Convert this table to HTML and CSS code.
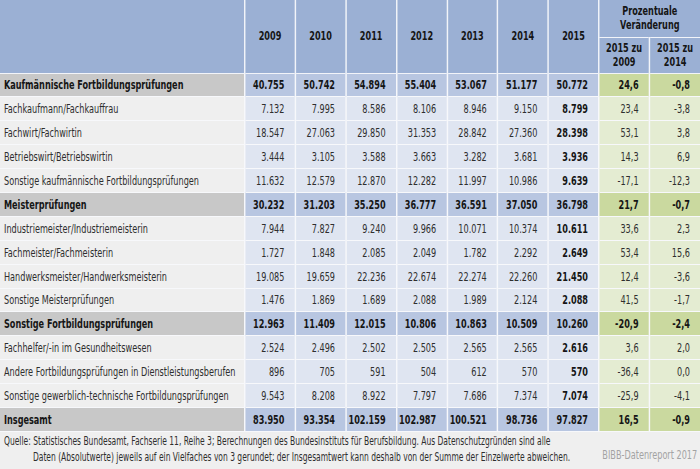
FILE: index.html
```html
<!DOCTYPE html>
<html lang="de">
<head>
<meta charset="utf-8">
<link rel="stylesheet" href="styles.css">
</head>
<body>
<div class="frame">
<div class="page">
<table class="tbl">
  <colgroup>
    <col class="c-label">
    <col class="c-num"><col class="c-num"><col class="c-num"><col class="c-num"><col class="c-num"><col class="c-num"><col class="c-num">
    <col class="c-num"><col class="c-num">
  </colgroup>
  <thead>
    <tr class="h1">
      <th rowspan="2" class="hl"></th>
      <th rowspan="2">2009</th>
      <th rowspan="2">2010</th>
      <th rowspan="2">2011</th>
      <th rowspan="2">2012</th>
      <th rowspan="2">2013</th>
      <th rowspan="2">2014</th>
      <th rowspan="2">2015</th>
      <th colspan="2" class="hp">Prozentuale<br>Veränderung</th>
    </tr>
    <tr class="h2">
      <th>2015 zu<br>2009</th>
      <th>2015 zu<br>2014</th>
    </tr>
  </thead>
  <tbody>
    <tr class="sum"><td class="lbl">Kaufmännische Fortbildungsprüfungen</td><td>40.755</td><td>50.742</td><td>54.894</td><td>55.404</td><td>53.067</td><td>51.177</td><td>50.772</td><td class="p">24,6</td><td class="p">-0,8</td></tr>
    <tr><td class="lbl">Fachkaufmann/Fachkauffrau</td><td>7.132</td><td>7.995</td><td>8.586</td><td>8.106</td><td>8.946</td><td>9.150</td><td class="b">8.799</td><td class="p">23,4</td><td class="p">-3,8</td></tr>
    <tr><td class="lbl">Fachwirt/Fachwirtin</td><td>18.547</td><td>27.063</td><td>29.850</td><td>31.353</td><td>28.842</td><td>27.360</td><td class="b">28.398</td><td class="p">53,1</td><td class="p">3,8</td></tr>
    <tr><td class="lbl">Betriebswirt/Betriebswirtin</td><td>3.444</td><td>3.105</td><td>3.588</td><td>3.663</td><td>3.282</td><td>3.681</td><td class="b">3.936</td><td class="p">14,3</td><td class="p">6,9</td></tr>
    <tr><td class="lbl">Sonstige kaufmännische Fortbildungsprüfungen</td><td>11.632</td><td>12.579</td><td>12.870</td><td>12.282</td><td>11.997</td><td>10.986</td><td class="b">9.639</td><td class="p">-17,1</td><td class="p">-12,3</td></tr>
    <tr class="sum"><td class="lbl">Meisterprüfungen</td><td>30.232</td><td>31.203</td><td>35.250</td><td>36.777</td><td>36.591</td><td>37.050</td><td>36.798</td><td class="p">21,7</td><td class="p">-0,7</td></tr>
    <tr><td class="lbl">Industriemeister/Industriemeisterin</td><td>7.944</td><td>7.827</td><td>9.240</td><td>9.966</td><td>10.071</td><td>10.374</td><td class="b">10.611</td><td class="p">33,6</td><td class="p">2,3</td></tr>
    <tr><td class="lbl">Fachmeister/Fachmeisterin</td><td>1.727</td><td>1.848</td><td>2.085</td><td>2.049</td><td>1.782</td><td>2.292</td><td class="b">2.649</td><td class="p">53,4</td><td class="p">15,6</td></tr>
    <tr><td class="lbl">Handwerksmeister/Handwerksmeisterin</td><td>19.085</td><td>19.659</td><td>22.236</td><td>22.674</td><td>22.274</td><td>22.260</td><td class="b">21.450</td><td class="p">12,4</td><td class="p">-3,6</td></tr>
    <tr><td class="lbl">Sonstige Meisterprüfungen</td><td>1.476</td><td>1.869</td><td>1.689</td><td>2.088</td><td>1.989</td><td>2.124</td><td class="b">2.088</td><td class="p">41,5</td><td class="p">-1,7</td></tr>
    <tr class="sum"><td class="lbl">Sonstige Fortbildungsprüfungen</td><td>12.963</td><td>11.409</td><td>12.015</td><td>10.806</td><td>10.863</td><td>10.509</td><td>10.260</td><td class="p">-20,9</td><td class="p">-2,4</td></tr>
    <tr><td class="lbl">Fachhelfer/-in im Gesundheitswesen</td><td>2.524</td><td>2.496</td><td>2.502</td><td>2.505</td><td>2.565</td><td>2.565</td><td class="b">2.616</td><td class="p">3,6</td><td class="p">2,0</td></tr>
    <tr><td class="lbl">Andere Fortbildungsprüfungen in Dienstleistungsberufen</td><td>896</td><td>705</td><td>591</td><td>504</td><td>612</td><td>570</td><td class="b">570</td><td class="p">-36,4</td><td class="p">0,0</td></tr>
    <tr><td class="lbl">Sonstige gewerblich-technische Fortbildungsprüfungen</td><td>9.543</td><td>8.208</td><td>8.922</td><td>7.797</td><td>7.686</td><td>7.374</td><td class="b">7.074</td><td class="p">-25,9</td><td class="p">-4,1</td></tr>
    <tr class="sum"><td class="lbl">Insgesamt</td><td>83.950</td><td>93.354</td><td>102.159</td><td>102.987</td><td>100.521</td><td>98.736</td><td>97.827</td><td class="p">16,5</td><td class="p">-0,9</td></tr>
  </tbody>
</table>
<div class="foot">
  <p class="src">Quelle: Statistisches Bundesamt, Fachserie 11, Reihe 3; Berechnungen des Bundesinstituts für Berufsbildung. Aus Datenschutzgründen sind alle<br>Daten (Absolutwerte) jeweils auf ein Vielfaches von 3 gerundet; der Insgesamtwert kann deshalb von der Summe der Einzelwerte abweichen.</p>
  <p class="brand">BIBB-Datenreport 2017</p>
</div>
</div>
</div>
</body>
</html>
```

FILE: styles.css
```css
html, body {
  margin: 0;
  padding: 0;
  background: #efefef;
  overflow: hidden;
}
.frame {
  width: 700px;
  height: 469px;
  overflow: hidden;
}
/* The reference uses a narrow sans; DejaVu Sans Condensed is compressed horizontally to match */
.page {
  width: 967px;
  height: 469px;
  background: #efefef;
  font-family: "DejaVu Sans Condensed", "DejaVu Sans", sans-serif;
  font-size: 12.5px;
  color: #2e2e2e;
  transform: scaleX(0.724);
  transform-origin: 0 0;
}
.tbl {
  width: 967px;
  border-collapse: collapse;
  table-layout: fixed;
}
.c-label { width: 338px; }
.tbl th {
  background: #9bb0d4;
  color: #151515;
  font-weight: bold;
  font-size: 12.5px;
  line-height: 14px;
  text-align: center;
  border-right: 2.8px solid #f2f4f9;
  border-bottom: 1px solid #f2f4f9;
  padding: 0;
}
.tbl th:last-child { border-right: none; }
.h1 { height: 37px; }
.h2 { height: 36px; }
.tbl td {
  height: 22.9px;
  padding: 0 14px 0 0;
  text-align: right;
  background: #dfe5f1;
  border-right: 2.8px solid #f7f8fb;
  border-bottom: 1px solid #f7f8fb;
  white-space: nowrap;
}
.tbl td:last-child { border-right: none; }
.tbl td.lbl {
  text-align: left;
  padding: 0 0 0 5.5px;
  background: #efefef;
}
.tbl td.p { background: #e4ecd2; }
.tbl td.b { font-weight: bold; color: #151515; }
.tbl tr.sum td {
  background: #b8c6e1;
  font-weight: bold;
  color: #151515;
}
.tbl tr.sum td.lbl { background: #c8c8c8; }
.tbl tr.sum td.p { background: #cad99f; }
.foot {
  position: relative;
  padding: 1px 5.5px 0 5.5px;
  font-size: 11.6px;
  line-height: 16px;
  color: #2e2e2e;
}
.src {
  margin: 0;
  padding-left: 40px;
  text-indent: -40px;
}
.brand {
  margin: 0;
  position: absolute;
  right: 4px;
  top: 15px;
  color: #a3a3a3;
  font-size: 12.5px;
}
```
